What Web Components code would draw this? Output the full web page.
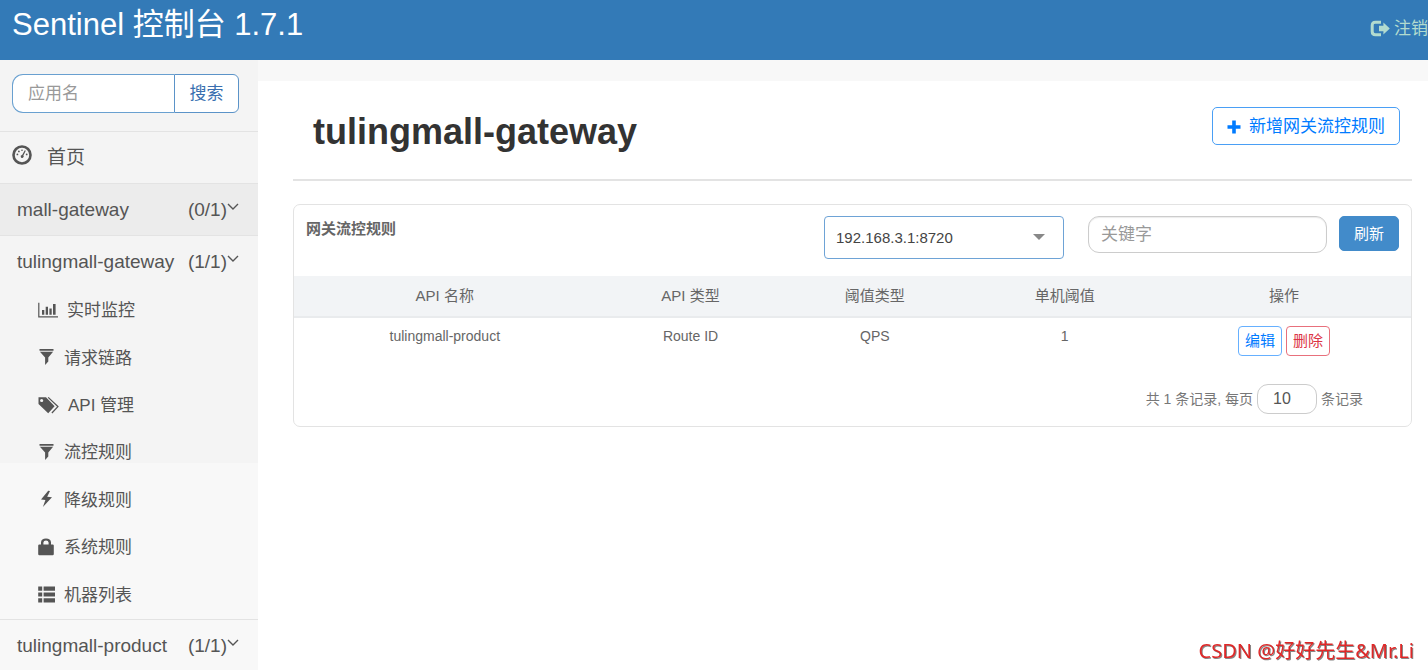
<!DOCTYPE html>
<html lang="zh-CN">
<head>
<meta charset="utf-8">
<meta name="viewport" content="width=device-width, initial-scale=1">
<title>Sentinel 控制台</title>
<style>
  :root {
    --brand:#337ab7; --primary:#007bff; --danger:#dc3545; --text:#555; --text-dim:#777;
    --line:#e3e3e3; --strip:#f8f8f8;
  }
  * { box-sizing:border-box; }
  body {
    margin:0; min-height:100vh; display:flex; flex-direction:column; overflow:hidden;
    background:#fff; color:var(--text);
    font-family:"Liberation Sans","Noto Sans CJK SC",sans-serif; font-size:17px; line-height:24px;
  }
  .body { flex:1; display:flex; }
  main { flex:1; min-width:0; border-top:21px solid var(--strip); padding:26px 16px 0 35px; }
</style>
</head>
<body>
  <app-header>Sentinel 控制台 1.7.1</app-header>
  <div class="body">
    <side-bar>
      <nav-home>首页</nav-home>
      <nav-group name="mall-gateway" count="(0/1)" active></nav-group>
      <nav-group name="tulingmall-gateway" count="(1/1)">
        <nav-item icon="chart">实时监控</nav-item>
        <nav-item icon="filter">请求链路</nav-item>
        <nav-item icon="tags">API 管理</nav-item>
        <nav-item icon="filter">流控规则</nav-item>
        <nav-item icon="flash">降级规则</nav-item>
        <nav-item icon="lock">系统规则</nav-item>
        <nav-item icon="list">机器列表</nav-item>
      </nav-group>
      <nav-group name="tulingmall-product" count="(1/1)"></nav-group>
    </side-bar>
    <main>
      <page-head action="新增网关流控规则">tulingmall-gateway</page-head>
      <rule-panel>
        <span slot="title">网关流控规则</span>
        <rule-table></rule-table>
        <record-pager slot="footer" total="1" size="10"></record-pager>
      </rule-panel>
    </main>
  </div>
  <water-mark>CSDN @好好先生&amp;Mr.Li</water-mark>

<script>
// name -> [width, height, svg body]; sizes are the drawn size in pixels
const ICONS = {
  logout: [20, 18, `<path d="M11 2.2H5.4Q2.2 2.2 2.2 5.4v6.2Q2.2 14.8 5.4 14.8H11" fill="none" stroke="currentColor" stroke-width="3"/><path d="M9 5.8h4.4V2.6L19.8 8.5l-6.4 5.9v-3.2H9z"/>`],
  gauge: [20, 20, `<circle cx="10" cy="10" r="8.5" fill="none" stroke="currentColor" stroke-width="2.6"/><path d="M12.8 5.2l1 .5-2.4 4.8a1.5 1.5 0 1 1-1.3-.6z"/><circle cx="5.4" cy="9.4" r=".9"/><circle cx="6.9" cy="6.4" r=".9"/><circle cx="10" cy="5.2" r=".8"/><circle cx="14.7" cy="9.4" r=".9"/>`],
  chart: [20, 16, `<path d="M.2.8h1.2v13.4H20v1.3H.2z"/><path d="M4 8h2.3v4.8H4zM7.7 4.7H10v8.1H7.7zM11.4 6.6h2.3v6.2h-2.3zM15 2h2.6v10.8H15z"/>`],
  filter: [17, 18, `<path d="M1.5 1h14v1.8h-14zM1.9 3.7h13.2l-4.8 5.9v4L7.1 17V9.6z"/>`],
  tags: [21, 18, `<path fill-rule="evenodd" d="M.5 1.2H8l8.6 9-6.4 7L.5 8zM3.6 2.9a1.6 1.6 0 1 0 .1 3.2 1.6 1.6 0 0 0-.1-3.2z"/><path d="M10.2 1.4l9.7 9.2-6 6.4" fill="none" stroke="currentColor" stroke-width="1.3"/>`],
  flash: [17, 18, `<path d="M10.2.7L3 9.4l4.4.5L4.9 17 14 7.2l-4.8-.5L12 .9z"/>`],
  lock: [17, 18, `<path fill-rule="evenodd" d="M3 6.4V4.2Q3.4.5 8 .5t5 3.7v2.2h1.6q1.2 0 1.2 1.2V16q0 1.3-1.2 1.3H1.4Q.2 17.3.2 16V7.6q0-1.2 1.2-1.2zm2.4 0h5.2V4.5Q10.4 2.6 8 2.6T5.4 4.5z"/>`],
  list: [17, 17, `<path d="M.2.5h4v4.2h-4zM.2 6.4h4v4.2h-4zM.2 12.3h4v4.2h-4zM5.6.5H17v4.2H5.6zM5.6 6.4H17v4.2H5.6zM5.6 12.3H17v4.2H5.6z"/>`],
  chevron: [12, 8, `<path d="M1 1l5 5 5-5" fill="none" stroke="currentColor" stroke-width="1.4"/>`],
  plus: [14, 14, `<path d="M5.2.5h3.6v4.7h4.7v3.6H8.8v4.7H5.2V8.8H.5V5.2h4.7z"/>`],
  caret: [12, 6, `<path d="M0 0h12L6 6z"/>`],
};

function icon(name) {
  const [w, h, body] = ICONS[name];
  return `<svg class="icon" width="${w}" height="${h}" viewBox="0 0 ${w} ${h}" fill="currentColor" aria-hidden="true">${body}</svg>`;
}

const BASE = `
  *, :host { box-sizing:border-box; }
  button, input, select { font:inherit; margin:0; }
  button { cursor:pointer; }
  a { color:inherit; text-decoration:none; }
  .icon { display:block; flex:none; }
`;

// Every element below only differs in its styles and markup.
class BaseElement extends HTMLElement {
  constructor() {
    super();
    this.attachShadow({ mode: "open" });
  }

  connectedCallback() {
    this.shadowRoot.innerHTML = `<style>${BASE}${this.constructor.css}</style>${this.render()}`;
  }
}

class AppHeader extends BaseElement {
  static css = `
    :host { display:flex; justify-content:space-between; align-items:flex-start; height:60px; padding-left:12px;
            background:var(--brand); color:#fff; overflow:hidden; }
    .brand { font-size:31px; line-height:36px; padding-top:7px; }
    .logout { display:flex; align-items:center; gap:4px; margin-top:17px; color:#b2dbcf; white-space:nowrap; }
  `;
  render() {
    return `<a class="brand" href="#"><slot></slot></a><a class="logout" href="#">${icon("logout")}注销</a>`;
  }
}

class SideBar extends BaseElement {
  static css = `
    :host { display:block; flex:none; width:258px; background:linear-gradient(#f4f4f4 403px, #f8f8f8 403px); }
    form { display:flex; padding:14px 19px 18px 12px; }
    input { flex:1; min-width:0; height:39px; padding:0 15px; border:1px solid #69a0d0; border-right:0;
            border-radius:11px 0 0 11px; background:#fff; color:var(--text); outline:0; }
    input::placeholder { color:#999; opacity:1; }
    button { width:65px; height:39px; padding:0; border:1px solid #5b93c8; border-radius:0 6px 6px 0; background:#fff; color:#3a6fb0; }
  `;
  render() {
    return `<form><input type="text" placeholder="应用名" aria-label="应用名"><button type="button">搜索</button></form><nav><slot></slot></nav>`;
  }
}

class NavHome extends BaseElement {
  static css = `
    :host { display:block; border-top:1px solid var(--line); }
    a { display:flex; align-items:center; gap:15px; height:51px; padding:0 12px; font-size:19px; }
    .icon { margin-bottom:5px; }
  `;
  render() {
    return `<a href="#">${icon("gauge")}<slot></slot></a>`;
  }
}

class NavGroup extends BaseElement {
  static css = `
    :host { display:block; border-top:1px solid var(--line); }
    .head { display:flex; align-items:center; height:51px; padding:0 19px 0 17px; font-size:19px; }
    :host([active]) .head { background:#ececec; }
    .name { flex:1; }
    .head .icon { margin-bottom:6px; }
    .items { display:grid; grid-auto-rows:1fr; }
    .items.filled { min-height:332px; }
  `;
  render() {
    const filled = this.children.length ? " filled" : "";
    return `<a class="head" href="#"><span class="name">${esc(this.getAttribute("name"))}</span>
      <span>${esc(this.getAttribute("count"))}</span>${icon("chevron")}</a>
      <div class="items${filled}"><slot></slot></div>`;
  }
}

class NavItem extends BaseElement {
  static css = `
    :host { display:block; }
    a { display:flex; align-items:center; height:100%; gap:9px; padding:1px 0 0 38px; }
    .icon { margin-bottom:3px; }
  `;
  render() {
    return `<a href="#">${icon(this.getAttribute("icon"))}<slot></slot></a>`;
  }
}

class PageHead extends BaseElement {
  static css = `
    :host { display:flex; justify-content:space-between; align-items:flex-start; height:74px; padding:0 12px 0 20px;
            border-bottom:2px solid var(--line); }
    h1 { margin:0; font-size:36px; line-height:50px; color:#333; }
    button { display:flex; align-items:center; gap:8px; height:38px; padding:2px 14px 0; border:1px solid #4a9ff5; border-radius:5px;
             background:#fff; color:var(--primary); }
  `;
  render() {
    return `<h1><slot></slot></h1><button type="button">${icon("plus")}${esc(this.getAttribute("action"))}</button>`;
  }
}

class RulePanel extends BaseElement {
  static css = `
    :host { display:block; margin-top:23px; border:1px solid var(--line); border-radius:7px; }
    .bar { display:flex; align-items:flex-start; height:71px; padding:11px 12px 0; }
    .title { flex:1; font-size:15px; font-weight:bold; line-height:26px; color:#666; }
    .pick { position:relative; width:240px; margin-right:24px; }
    .pick .icon { position:absolute; right:19px; top:18px; color:#888; pointer-events:none; }
    select { display:block; appearance:none; width:100%; height:43px; padding:0 11px; border:1px solid #6ea3d6; border-radius:4px;
             background:#fff; color:#444; font-size:15px; outline:0; }
    input { width:239px; height:37px; margin-right:12px; padding:0 12px; border:1px solid #ccc; border-radius:11px;
            background:#fff; color:var(--text); outline:0; box-shadow:inset 0 1px 1px rgba(0,0,0,.08); }
    input::placeholder { color:#999; opacity:1; }
    .refresh { width:60px; height:35px; padding:0; border:1px solid #428bca; border-radius:5px; background:#428bca; color:#fff; font-size:15px; }
  `;
  render() {
    return `<div class="bar">
        <div class="title"><slot name="title"></slot></div>
        <div class="pick"><select aria-label="机器"><option>192.168.3.1:8720</option></select>${icon("caret")}</div>
        <input type="text" placeholder="关键字" aria-label="关键字">
        <button class="refresh" type="button">刷新</button>
      </div>
      <slot></slot><slot name="footer"></slot>`;
  }
}

const COLUMNS = [["API 名称", 27], ["API 类型", 17], ["阈值类型", 16], ["单机阈值", 18], ["操作", 22]];
const RULES = [["tulingmall-product", "Route ID", "QPS", "1"]];

class RuleTable extends BaseElement {
  static css = `
    :host { display:block; }
    table { width:100%; table-layout:fixed; border-collapse:collapse; text-align:center; color:#666; }
    th { height:41px; padding:0; background:#f2f4f6; border-bottom:2px solid #e9ebed; font-size:15px; font-weight:normal; }
    td { height:48px; padding:8px 0; vertical-align:top; font-size:14px; line-height:20px; }
    th:last-child, td:last-child { padding-right:8px; }
    .ops { display:flex; justify-content:center; gap:4px; }
    button { height:30px; padding:0 6px; border:1px solid; border-radius:4px; background:#fff; font-size:15px; }
    .edit { color:var(--primary); border-color:#66b0ff; }
    .del { color:var(--danger); border-color:#e8707c; }
  `;
  render() {
    const head = COLUMNS.map(([name, w]) => `<th style="width:${w}%">${esc(name)}</th>`).join("");
    const rows = RULES.map(
      (r) => `<tr>${r.map((c) => `<td>${esc(c)}</td>`).join("")}
        <td><div class="ops"><button class="edit" type="button">编辑</button><button class="del" type="button">删除</button></div></td></tr>`,
    ).join("");
    return `<table><thead><tr>${head}</tr></thead><tbody>${rows}</tbody></table>`;
  }
}

class RecordPager extends BaseElement {
  static css = `
    :host { display:flex; justify-content:flex-end; align-items:center; gap:4px; padding:19px 48px 12px; font-size:14px; color:var(--text-dim); }
    input { width:60px; height:30px; padding:0 15px; border:1px solid #ccc; border-radius:11px; background:#fff;
            color:var(--text); font-size:16px; outline:0; }
  `;
  render() {
    return `<span>共 ${esc(this.getAttribute("total"))} 条记录, 每页</span>
      <input type="text" aria-label="每页条数" value="${esc(this.getAttribute("size"))}"><span>条记录</span>`;
  }
}

class WaterMark extends BaseElement {
  static css = `
    :host { position:fixed; right:14px; bottom:6px; font:400 20px/26px "Noto Sans","Noto Sans CJK SC",sans-serif;
            color:#e02828; text-shadow:1px 1px 0 #888; pointer-events:none; }
  `;
  render() {
    return `<slot></slot>`;
  }
}

function esc(s) {
  return String(s).replace(/[&<>"]/g, (c) => ({ "&": "&amp;", "<": "&lt;", ">": "&gt;", '"': "&quot;" }[c]));
}

customElements.define("app-header", AppHeader);
customElements.define("side-bar", SideBar);
customElements.define("nav-home", NavHome);
customElements.define("nav-group", NavGroup);
customElements.define("nav-item", NavItem);
customElements.define("page-head", PageHead);
customElements.define("rule-panel", RulePanel);
customElements.define("rule-table", RuleTable);
customElements.define("record-pager", RecordPager);
customElements.define("water-mark", WaterMark);
</script>
</body>
</html>
